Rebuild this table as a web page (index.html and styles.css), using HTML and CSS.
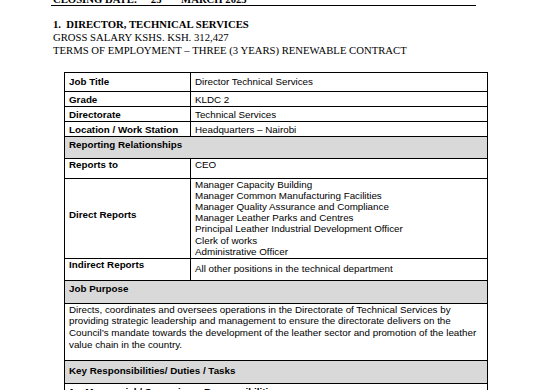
FILE: index.html
```html
<!DOCTYPE html>
<html lang="en">
<head>
    <meta charset="UTF-8">
    <meta name="viewport" content="width=device-width, initial-scale=1.0">
    <title>Director, Technical Services</title>
    <link rel="stylesheet" href="styles.css">
</head>
<body>
    <div class="page">
        <div class="closing">CLOSING DATE:&nbsp;&nbsp;&nbsp;&nbsp; 25<sup>th</sup>&nbsp;&nbsp;&nbsp;&nbsp; MARCH 2025</div>

        <div class="job-head">
            <h2>1.&nbsp; DIRECTOR, TECHNICAL SERVICES</h2>
            <p>GROSS SALARY KSHS. KSH. 312,427</p>
            <p>TERMS OF EMPLOYMENT &ndash; THREE (3 YEARS) RENEWABLE CONTRACT</p>
        </div>

        <div class="job-table">
            <div class="label r-title">Job Title</div>
            <div class="value r-title">Director Technical Services</div>

            <div class="label">Grade</div>
            <div class="value">KLDC 2</div>

            <div class="label">Directorate</div>
            <div class="value">Technical Services</div>

            <div class="label">Location / Work Station</div>
            <div class="value">Headquarters &ndash; Nairobi</div>

            <div class="section">Reporting Relationships</div>

            <div class="label r-tight">Reports to</div>
            <div class="value r-tight">CEO</div>

            <div class="label r-middle">Direct Reports</div>
            <div class="value r-list">
                Manager Capacity Building<br>
                Manager Common Manufacturing Facilities<br>
                Manager Quality Assurance and Compliance<br>
                Manager Leather Parks and Centres<br>
                Principal Leather Industrial Development Officer<br>
                Clerk of works<br>
                Administrative Officer
            </div>

            <div class="label r-tight">Indirect Reports</div>
            <div class="value r-low">All other positions in the technical department</div>

            <div class="section">Job Purpose</div>

            <div class="text">
                Directs, coordinates and oversees operations in the Directorate of Technical Services by<br>
                providing strategic leadership and management to ensure the directorate delivers on the<br>
                Council&rsquo;s mandate towards the development of the leather sector and promotion of the leather<br>
                value chain in the country.
            </div>

            <div class="section r-key">Key Responsibilities/ Duties / Tasks</div>

            <div class="text sub">1.&nbsp;&nbsp; Managerial / Supervisory Responsibilities</div>
        </div>
    </div>
</body>
</html>
```
FILE: styles.css
```css
body {
    margin: 0;
    background: #fff;
    color: #000;
    overflow: hidden;
}

.page {
    padding-left: 51px;
}

.closing {
    font-family: "Liberation Serif", "Times New Roman", serif;
    font-weight: bold;
    font-size: 10.7px;
    line-height: 12px;
    width: 425px;
    margin-top: -7px;
    padding-left: 2px;
    box-sizing: border-box;
    border-bottom: 1px solid #000;
}

.closing sup {
    font-size: 7px;
    line-height: 0;
}

.job-head {
    font-family: "Liberation Serif", "Times New Roman", serif;
    font-size: 10.7px;
    line-height: 13.2px;
    padding-left: 2px;
    margin-top: 12px;
}

.job-head h2 {
    font-size: 10.7px;
    margin: 0;
}

.job-head p {
    margin: 0;
}

.job-table {
    display: grid;
    grid-template-columns: 126px 297px;
    grid-template-rows: 19px 15px 15px 15px 22px 20px 80px 22px 23px 57px 23px 30px;
    width: 424px;
    box-sizing: border-box;
    margin-left: 13px;
    margin-top: 14px;
    border-top: 1px solid #000;
    border-left: 1px solid #000;
    font-family: "Liberation Sans", Arial, sans-serif;
    font-size: 9.8px;
    line-height: 11.3px;
}

.job-table > div {
    box-sizing: border-box;
    border-right: 1px solid #000;
    border-bottom: 1px solid #000;
    padding: 2px 4px 0;
}

.label {
    font-weight: bold;
}

.value {
    padding-left: 5px;
}

.section {
    grid-column: 1 / 3;
    background: #d9d9d9;
    font-weight: bold;
}

.text {
    grid-column: 1 / 3;
    line-height: 11.8px;
}

.job-table > .text {
    padding-top: 0;
}

.job-table > .sub {
    font-weight: bold;
    padding-top: 2px;
}

.job-table > .r-title {
    padding-top: 3px;
}

.job-table > .r-tight {
    padding-top: 0;
}

.job-table > .r-low {
    padding-top: 4px;
}

.job-table > .r-key {
    padding-top: 4px;
}

.job-table > .r-middle {
    display: flex;
    align-items: center;
    padding-bottom: 8px;
}

.job-table > .r-list {
    padding-top: 0;
    line-height: 11.2px;
}
```
